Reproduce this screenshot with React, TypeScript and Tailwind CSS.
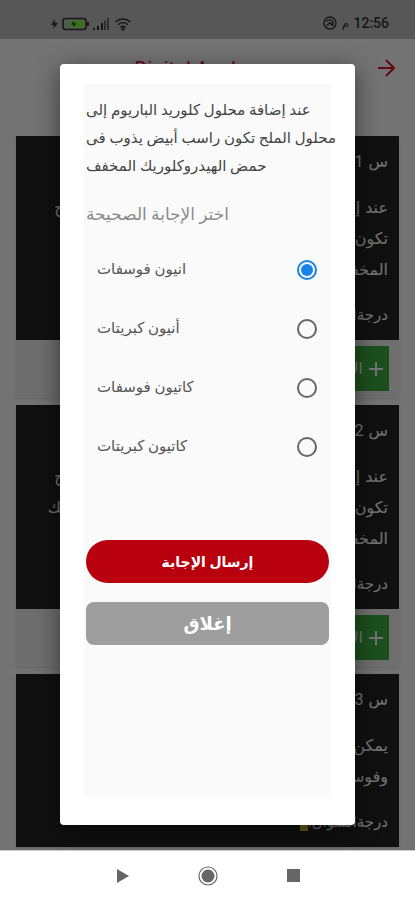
import { useState } from "react";

type Question = {
  id: number;
  lines: string[];
  score: number;
  answerable: boolean;
};

const questions: Question[] = [
  {
    id: 1,
    lines: [
      "عند إضافة محلول كلوريد الباريوم إلى محلول الملح",
      "تكون راسب أبيض يذوب فى حمض الهيدروكلوريك",
      "المخفف",
    ],
    score: 1,
    answerable: true,
  },
  {
    id: 2,
    lines: [
      "عند إضافة محلول كلوريد الباريوم إلى محلول الملح",
      "تكون راسب أبيض لا يذوب فى حمض الهيدروكلوريك",
      "المخفف",
    ],
    score: 1,
    answerable: true,
  },
  {
    id: 3,
    lines: ["يمكن التمييز بين أنيون كبريتات", "وفوسفات"],
    score: 1,
    answerable: false,
  },
];

const prompt = [
  "عند إضافة محلول كلوريد الباريوم إلى",
  "محلول الملح تكون راسب أبيض يذوب فى",
  "حمض الهيدروكلوريك المخفف",
];

const answers = ["انيون فوسفات", "أنيون كبريتات", "كاتيون فوسفات", "كاتيون كبريتات"];

function StatusBar() {
  return (
    <div className="flex h-[39px] shrink-0 items-end justify-between bg-[#c1c1c1] pr-[26px] pb-2 pl-[51px] text-[#333]">
      <div className="flex items-center gap-1">
        <svg width="7" height="12" viewBox="0 0 7 12" fill="currentColor">
          <path d="M4 1 0 7h3l-1 4 5-6H4z" />
        </svg>
        <svg width="27" height="14" viewBox="0 0 27 14" fill="none">
          <rect x="1" y="1.500" width="23" height="11" rx="2.500" stroke="#333" strokeWidth="1.600" />
          <rect x="25" y="5" width="2" height="4" fill="#333" />
          <rect x="7" y="3.500" width="15" height="7" fill="#7bff3a" />
          <path d="M12 4 9 7.500h2.500L11 10l4-3.500h-2.500z" fill="#333" />
        </svg>
        <svg width="17" height="12" viewBox="0 0 17 12" fill="currentColor">
          <path d="M0 10h2v2H0zM4 8h2v4H4zM8 5h2v7H8z" />
          <path d="M11 2.500h2V12h-2zM14 0h2v12h-2z" opacity=".6" />
        </svg>
        <svg width="18" height="14" viewBox="0 0 18 14" fill="none" stroke="currentColor" strokeWidth="1.500">
          <path d="M1.500 5c4.500-4 10.500-4 15 0M4 7.800c3-2.700 7-2.700 10 0M6.300 10.300c1.700-1.400 3.700-1.400 5.400 0" />
          <circle cx="9" cy="12" r="1" fill="currentColor" />
        </svg>
      </div>
      <div className="flex items-center gap-1 text-sm leading-4">
        <svg width="14" height="14" viewBox="0 0 14 14" fill="none" stroke="currentColor" strokeWidth="1.400">
          <circle cx="7" cy="7" r="6" />
          <path d="M3.500 5.500c2-2.500 5.500-2 6.500.5v3M4 9.500l3-3 3 3.500" />
        </svg>
        <span className="w-2 text-center text-xs">م</span>
        <span className="font-[Roboto] font-medium">12:56</span>
      </div>
    </div>
  );
}

function AppHeader() {
  return (
    <header className="flex h-[97px] shrink-0 items-start px-5 pt-4 text-[#e0102a]">
      <h1 className="flex-1 pt-[2px] pr-4 text-center font-[Roboto] text-xl leading-6">Digital Angle</h1>
      <button aria-label="رجوع" className="pt-1">
        <svg width="18" height="18" viewBox="0 0 18 18" fill="none" stroke="currentColor" strokeWidth="2">
          <path d="M1 9h15M9 1l8 8-8 8" />
        </svg>
      </button>
    </header>
  );
}

function QuestionCard({ question }: { question: Question }) {
  return (
    <article dir="rtl" className="shrink-0 bg-[#f4f4f4] font-['DejaVu_Sans',sans-serif] shadow">
      <div className="bg-[#242424] px-[11px] pt-3 pb-[11px] text-base leading-7 whitespace-nowrap text-white">
        <p>
          س <span className="font-[Roboto]">{question.id}</span>
        </p>
        <div className="mt-4 leading-[31px]">
          {question.lines.map((line) => (
            <p key={line}>{line}</p>
          ))}
        </div>
        <p className="mt-4 font-[Roboto,'DejaVu_Sans'] text-[15px] leading-7">
          درجةالسؤال:<span className="bg-[#e4d83a] text-[#e4d83a]">{question.score}</span>
        </p>
      </div>
      {question.answerable && (
        <div className="px-[10px] pt-[6px] pb-[7px]">
          <button className="flex h-[45px] w-24 items-center gap-1 bg-[#3fb043] px-1 text-white">
            <svg width="18" height="18" viewBox="0 0 18 18" stroke="currentColor" strokeWidth="2">
              <path d="M9 2v14M2 9h14" />
            </svg>
            الإجابة
          </button>
        </div>
      )}
    </article>
  );
}

function AnswerDialog() {
  const [selected, setSelected] = useState(0);

  return (
    <div className="absolute inset-0 flex bg-black/55 px-[60px] pt-16 pb-[25px]">
      <div
        role="dialog"
        aria-modal="true"
        className="min-w-0 flex-1 rounded bg-white px-6 pt-5 pb-7 shadow-[0_6px_24px_rgba(0,0,0,0.5)]"
      >
        <div className="flex h-full flex-col bg-[#fafafa] px-[2px] pt-3" dir="rtl">
          {/* ltr keeps a long line flush with the left edge */}
          <div dir="ltr" className="text-[15px] leading-7 whitespace-nowrap text-[#444]">
            {prompt.map((line) => (
              <p key={line}>{line}</p>
            ))}
          </div>

          <fieldset className="mt-5">
            <legend className="w-full text-left text-[17px] leading-7 text-[#8a8a8a]">
              اختر الإجابة الصحيحة
            </legend>
            <div className="pt-3">
              {answers.map((answer, i) => (
                <label
                  key={answer}
                  className="flex h-[59px] items-center justify-between pr-3 pl-[11px] text-[15px] text-[#555]"
                >
                  <input
                    type="radio"
                    name="answer"
                    checked={selected === i}
                    onChange={() => setSelected(i)}
                    className="grid size-5 appearance-none place-items-center rounded-full border-2 border-[#666] before:size-3 before:rounded-full checked:border-[#1583e9] checked:before:bg-[#1583e9]"
                  />
                  {answer}
                </label>
              ))}
            </div>
          </fieldset>

          <button className="mt-16 h-[43px] shrink-0 rounded-full bg-[#b8000e] text-sm font-bold text-white">
            إرسال الإجابة
          </button>
          <button className="mt-[19px] h-[43px] shrink-0 rounded-lg bg-[#9e9e9e] text-lg font-bold text-white">
            إغلاق
          </button>
        </div>
      </div>
    </div>
  );
}

function NavBar() {
  return (
    <nav className="grid h-[50px] shrink-0 grid-cols-[1fr_auto_1fr] items-center gap-[68px] border-t border-[#ccc] bg-white text-[#666]">
      <button aria-label="رجوع" className="justify-self-end">
        <svg width="14" height="14" viewBox="0 0 14 14" fill="currentColor">
          <path d="M1 0v14l12-7z" />
        </svg>
      </button>
      <button aria-label="الرئيسية">
        <svg width="20" height="20" viewBox="0 0 20 20">
          <circle cx="10" cy="10" r="9" fill="none" stroke="currentColor" strokeWidth="1.200" />
          <circle cx="10" cy="10" r="6.500" fill="currentColor" />
        </svg>
      </button>
      <button aria-label="التطبيقات" className="justify-self-start">
        <svg width="14" height="14" viewBox="0 0 14 14" fill="currentColor">
          <path d="M1 0h13v13H1z" />
        </svg>
      </button>
    </nav>
  );
}

export default function App() {
  return (
    <div className="flex h-screen flex-col overflow-hidden font-[Roboto,'DejaVu_Sans',sans-serif]">
      <div className="relative flex min-h-0 flex-1 flex-col overflow-hidden bg-white">
        <StatusBar />
        <AppHeader />
        <main className="flex min-h-0 flex-1 flex-col gap-[7px] overflow-hidden px-4">
          {questions.map((q) => (
            <QuestionCard key={q.id} question={q} />
          ))}
        </main>
        <AnswerDialog />
      </div>
      <NavBar />
    </div>
  );
}
